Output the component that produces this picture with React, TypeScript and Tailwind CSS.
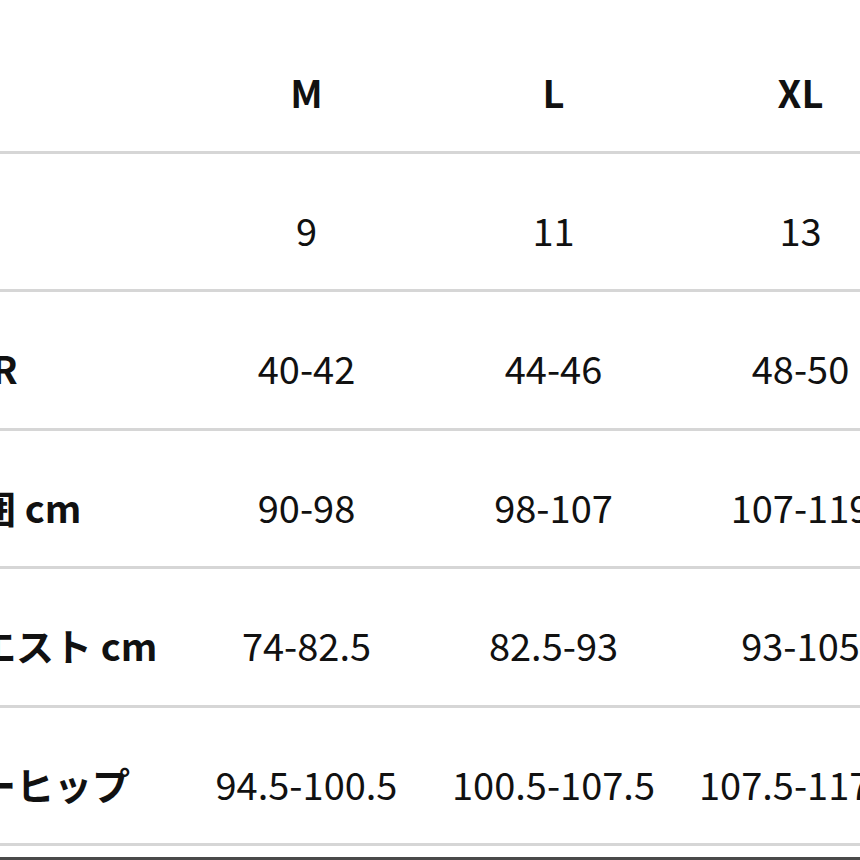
const sizes = ["M", "L", "XL"];

const rows: { label: string; values: string[] }[] = [
  { label: "JP", values: ["9", "11", "13"] },
  { label: "EUR", values: ["40-42", "44-46", "48-50"] },
  { label: "胸囲 cm", values: ["90-98", "98-107", "107-119"] },
  { label: "ウエスト cm", values: ["74-82.5", "82.5-93", "93-105"] },
  { label: "ローヒップ", values: ["94.5-100.5", "100.5-107.5", "107.5-117.5"] },
];

const font = { fontFamily: '"Noto Sans CJK JP", "Noto Sans", sans-serif' };

export default function App() {
  return (
    <div className="h-[860px] w-[860px] overflow-hidden bg-white text-[#111]" style={font}>
      <div className="-ml-[60px] w-[984px]">
        {/* header */}
        <div className="grid h-[154px] grid-cols-[243px_247px_247px_247px] border-b-[3px] border-[#d6d6d6] pt-[65px] text-[38px] font-bold leading-[54px]">
          <div />
          {sizes.map((s) => (
            <div key={s} className="text-center">
              {s}
            </div>
          ))}
        </div>

        {rows.map((row) => (
          <div
            key={row.label}
            className="grid h-[138.4px] grid-cols-[243px_247px_247px_247px] border-b-[3px] border-[#d6d6d6] pt-[49px] text-[38px] leading-[54px]"
          >
            <div className="whitespace-nowrap font-bold">{row.label}</div>
            {row.values.map((v, i) => (
              <div key={i} className="whitespace-nowrap text-center">
                {v}
              </div>
            ))}
          </div>
        ))}

        <div className="h-[11px]" />
        <div className="h-[3px] bg-[#4a4a4a]" />
      </div>
    </div>
  );
}
